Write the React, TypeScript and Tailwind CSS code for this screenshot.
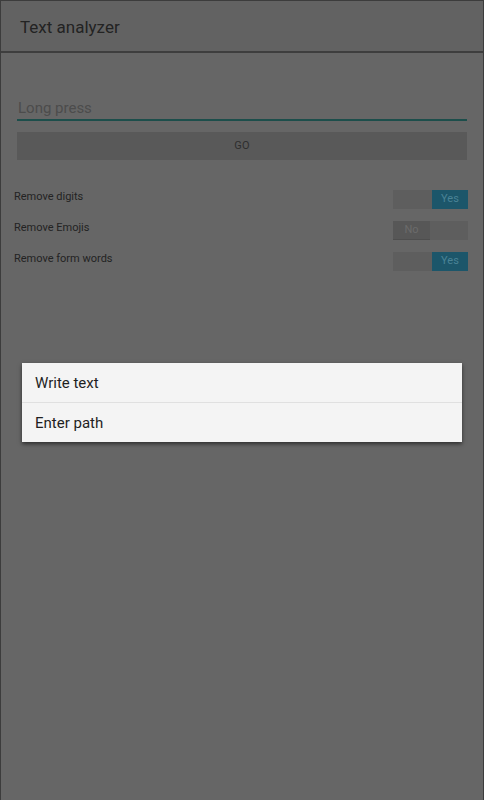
import React from 'react';

const options = [
  { label: 'Remove digits', on: true },
  { label: 'Remove Emojis', on: false },
  { label: 'Remove form words', on: true },
];

function Toggle({ on }: { on: boolean }) {
  return (
    <div className="flex h-[19px] w-[75px] bg-[#5e5e5e]">
      {on ? (
        <>
          <div className="flex-1" />
          <div className="flex w-[36px] items-center justify-center bg-[#1c566a] text-[11px] text-[#4a8396]">Yes</div>
        </>
      ) : (
        <>
          <div className="flex w-[37px] items-center justify-center border-b border-[#4e4e4e] bg-[#575757] text-[11px] text-[#6b6b6b]">No</div>
          <div className="flex-1" />
        </>
      )}
    </div>
  );
}

export default function App() {
  return (
    <div
      className="relative h-[800px] w-[484px] overflow-hidden border-x border-t border-[#3c3c3c] bg-[#666666]"
      style={{ fontFamily: 'Roboto, "Noto Sans", sans-serif' }}
    >
      {/* action bar */}
      <div className="flex h-[52px] items-center border-b-2 border-[#3e3e3e] bg-[#626262] pl-[19px] pt-[3px]">
        <span className="text-[17px] text-[#232323]">Text analyzer</span>
      </div>

      {/* input + button */}
      <div className="px-[16px] pt-[45px]">
        <div className="border-b-2 border-[#1c4e4b] pb-[1px] pl-[1px] text-[15px] leading-[20px] text-[#4c4c4c]">Long press</div>
        <div className="mt-[11px] flex h-[28px] items-center justify-center bg-[#595959] text-[11px] tracking-wide text-[#2e2e2e]">GO</div>
      </div>

      {/* options */}
      <div className="mt-[30px] flex flex-col gap-[12px] pl-[13px] pr-[15px]">
        {options.map((o) => (
          <div key={o.label} className="flex h-[19px] items-start justify-between">
            <span className="-mt-[1px] text-[11px] text-[#232323]">{o.label}</span>
            <Toggle on={o.on} />
          </div>
        ))}
      </div>

      {/* dialog */}
      <div className="absolute left-[21px] top-[362px] w-[440px] bg-[#f4f4f4] shadow-[0_2px_4px_rgba(0,0,0,0.55)]">
        <div className="flex h-[40px] items-center border-b border-[#e0e0e0] pl-[13px] pt-[1px] text-[15px] text-[#1f1f1f]">Write text</div>
        <div className="flex h-[39px] items-center pl-[13px] pt-[2px] text-[15px] text-[#1f1f1f]">Enter path</div>
      </div>
    </div>
  );
}
